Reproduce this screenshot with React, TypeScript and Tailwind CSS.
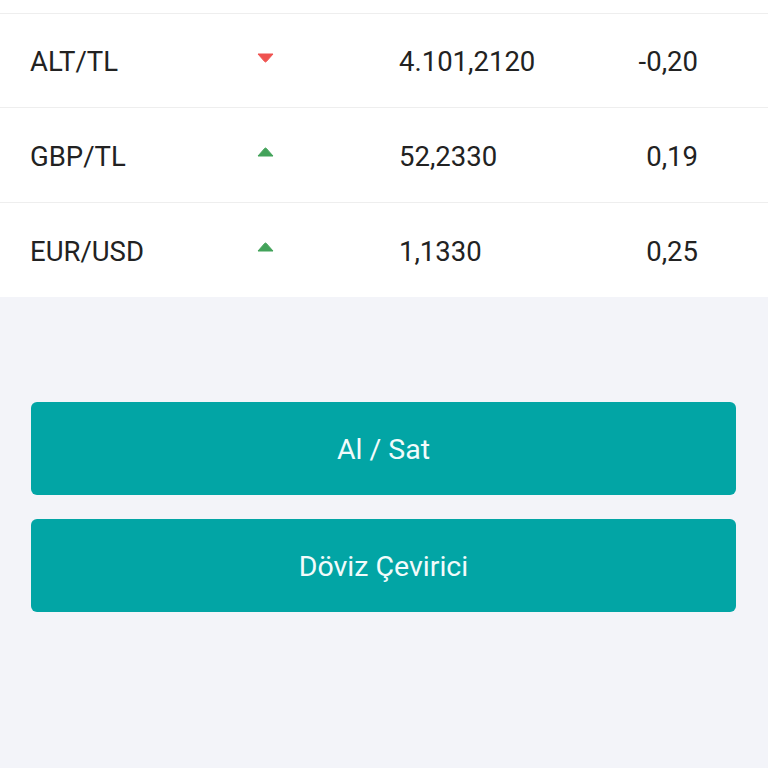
import React from 'react'

type Rate = {
  name: string
  trend: 'up' | 'down'
  price: string
  change: string
}

const rates: Rate[] = [
  { name: 'ALT/TL', trend: 'down', price: '4.101,2120', change: '-0,20' },
  { name: 'GBP/TL', trend: 'up', price: '52,2330', change: '0,19' },
  { name: 'EUR/USD', trend: 'up', price: '1,1330', change: '0,25' },
]

function Trend({ dir }: { dir: 'up' | 'down' }) {
  return (
    <svg width="17" height="10" viewBox="0 0 17 10" className="block">
      {dir === 'down' ? (
        <path d="M1 1 L16 1 L9.3 8.6 Q8.5 9.4 7.7 8.6 Z" fill="#ef5350" stroke="#ef5350" strokeWidth="1" strokeLinejoin="round" />
      ) : (
        <path d="M1 9 L16 9 L9.3 1.4 Q8.5 0.6 7.7 1.4 Z" fill="#43a35a" stroke="#43a35a" strokeWidth="1" strokeLinejoin="round" />
      )}
    </svg>
  )
}

export default function App() {
  return (
    <div
      className="min-h-[768px] w-full bg-[#f3f4f9] text-[#222222]"
      style={{ fontFamily: 'Roboto, "Noto Sans", sans-serif' }}
    >
      <div className="bg-white">
        <div className="h-[14px] border-b border-[#eeeeee]" />
        {rates.map((r, i) => (
          <div
            key={r.name}
            className={`flex items-center pl-[30px] text-[27.5px] leading-none ${
              i === 1 ? 'h-[95px]' : 'h-[94px]'
            } ${i < rates.length - 1 ? 'border-b border-[#eeeeee]' : ''}`}
          >
            <div className="w-[227px] pt-[3px]">{r.name}</div>
            <div className={`w-[17px] ${r.trend === 'down' ? 'mb-[5px]' : 'mb-[7px]'}`}>
              <Trend dir={r.trend} />
            </div>
            <div className="w-[125px]" />
            <div className="w-[200px] pt-[3px]">{r.price}</div>
            <div className="w-[99px] pt-[3px] text-right">{r.change}</div>
          </div>
        ))}
      </div>

      <div className="flex flex-col gap-[24px] pl-[31px] pr-[32px] pt-[105px]">
        <button className="h-[93px] w-full rounded-[6px] bg-[#02a5a5] pt-[4px] text-[28.5px] text-[#f2fbfb]">
          Al / Sat
        </button>
        <button className="h-[93px] w-full rounded-[6px] bg-[#02a5a5] pt-[4px] text-[28.5px] text-[#f2fbfb]">
          Döviz Çevirici
        </button>
      </div>
    </div>
  )
}
